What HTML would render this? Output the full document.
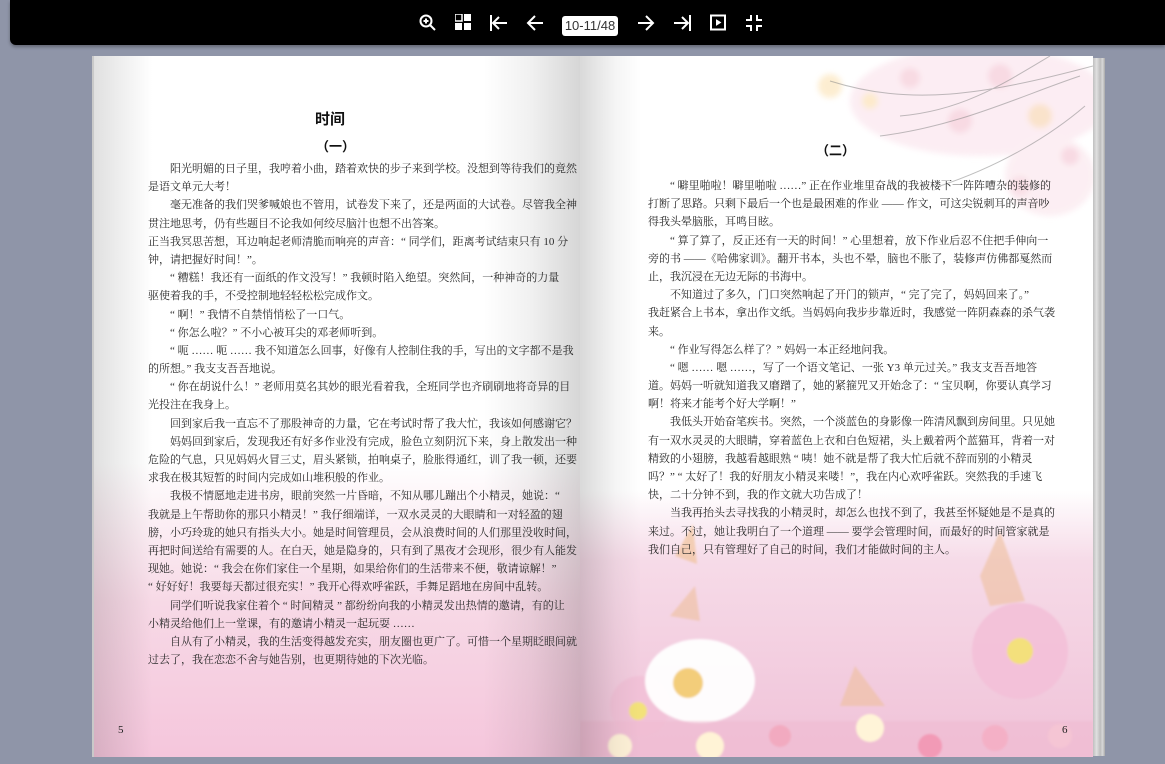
<!DOCTYPE html>
<html><head><meta charset="utf-8"><style>
*{margin:0;padding:0;box-sizing:border-box}
body{width:1165px;height:764px;overflow:hidden;background:#8f95a8;position:relative;font-family:"Liberation Serif","Noto Serif CJK SC","Noto Sans CJK SC",serif;}
.tb{position:absolute;left:10px;top:0;width:1155px;height:45px;background:#000;border-bottom-left-radius:6px;box-shadow:0 2px 3px rgba(0,0,0,.3)}
.ic{position:absolute;top:14px}
.pg{position:absolute;left:562px;top:16px;width:56px;height:20px;background:#fff;border-radius:3px;font:13px "Liberation Sans",sans-serif;color:#333;text-align:center;line-height:20px}
.lp{position:absolute;left:92px;top:56px;width:488px;height:701px;background:linear-gradient(180deg,#fff 0,#fff 58%,#f7d9e6 78%,#f5c6dc 100%);border-left:2px solid #c9c9c9}
.lp:after{content:"";position:absolute;inset:0;background:linear-gradient(90deg,rgba(0,0,0,.12) 0,rgba(0,0,0,0) 12%,rgba(0,0,0,0) 80%,rgba(0,0,0,.06) 90%,rgba(0,0,0,.16) 100%)}
.rp{position:absolute;left:580px;top:56px;width:513px;height:701px;background:linear-gradient(180deg,#fff 0,#fff 62%,#f6dbe8 72%,#f0c2d8 100%);overflow:hidden}
.rp:after{content:"";position:absolute;inset:0;background:linear-gradient(90deg,rgba(0,0,0,.15) 0,rgba(0,0,0,.04) 7%,rgba(0,0,0,0) 12%)}
.edge{position:absolute;left:1093px;top:58px;width:12px;height:698px;background:linear-gradient(90deg,#bfbfbf,#e0e0e0 30%,#bdbdbd 60%,#d8d8d8 80%,#a8a8a8)}
.t{position:absolute;font-size:11px;color:#2a2a2a;line-height:18.2px;z-index:2}
.t div{text-align:justify;text-align-last:justify;white-space:nowrap;height:18.2px}
.t div.e{text-align-last:left}
.t div.i{padding-left:22px}
h1{position:absolute;font:bold 15px "Liberation Sans","Noto Sans CJK SC",sans-serif;color:#111;z-index:2}
.num{position:absolute;font-size:11px;color:#222;z-index:2}
</style></head><body>
<div class="tb"></div>
<svg class="ic" style="left:419px" width="18" height="18" viewBox="0 0 18 18" fill="none" stroke="#fff" stroke-width="2"><circle cx="7" cy="7" r="5.5"/><path d="M11 11l5 5M7 4.5v5M4.5 7h5"/></svg>
<svg class="ic" style="left:455px" width="17" height="17" viewBox="0 0 17 17" fill="#fff"><rect x="0" y="0" width="7" height="7" fill="none" stroke="#fff" stroke-width="1.5"/><rect x="9" y="0" width="7" height="7"/><rect x="0" y="9" width="7" height="7"/><rect x="9" y="9" width="7" height="7"/></svg>
<svg class="ic" style="left:489px" width="20" height="18" viewBox="0 0 20 18" fill="none" stroke="#fff" stroke-width="2"><path d="M2 1v16M18 9H5M10 3L4 9l6 6"/></svg>
<svg class="ic" style="left:526px" width="18" height="18" viewBox="0 0 18 18" fill="none" stroke="#fff" stroke-width="2"><path d="M17 9H3M9 2L2 9l7 7"/></svg>
<div class="pg">10-11/48</div>
<svg class="ic" style="left:637px" width="18" height="18" viewBox="0 0 18 18" fill="none" stroke="#fff" stroke-width="2"><path d="M1 9h14M9 2l7 7-7 7"/></svg>
<svg class="ic" style="left:672px" width="20" height="18" viewBox="0 0 20 18" fill="none" stroke="#fff" stroke-width="2"><path d="M18 1v16M2 9h13M10 3l6 6-6 6"/></svg>
<svg class="ic" style="left:710px" width="16" height="17" viewBox="0 0 16 17" fill="none" stroke="#fff" stroke-width="2"><rect x="1" y="1.5" width="14" height="14"/><path d="M6.5 6v5l4-2.5z" fill="#fff" stroke-width="1"/></svg>
<svg class="ic" style="left:745px" width="18" height="18" viewBox="0 0 18 18" fill="none" stroke="#fff" stroke-width="2"><path d="M6 1v5H1M12 1v5h5M6 17v-5H1M12 17v-5h5"/></svg>

<div class="lp"></div>
<div class="rp">
<svg width="513" height="701" style="position:absolute;left:0;top:0">
<defs><filter id="b" x="-20%" y="-20%" width="140%" height="140%"><feGaussianBlur stdDeviation="3"/></filter><filter id="b2"><feGaussianBlur stdDeviation="1"/></filter></defs>
<g opacity=".7" filter="url(#b)">
<ellipse cx="400" cy="45" rx="130" ry="55" fill="#fbe6ee"/>
<ellipse cx="470" cy="120" rx="45" ry="40" fill="#fbe8ee"/>
<circle cx="250" cy="30" r="12" fill="#fce6be"/><circle cx="330" cy="22" r="10" fill="#f6ccd8"/><circle cx="420" cy="20" r="12" fill="#f6cbd8"/><circle cx="460" cy="60" r="12" fill="#f9d8b6"/><circle cx="380" cy="65" r="12" fill="#f6cbd8"/><circle cx="490" cy="100" r="9" fill="#f6cbd8"/><circle cx="290" cy="45" r="8" fill="#fde2b6"/><circle cx="440" cy="130" r="10" fill="#f7d3dd"/>
</g>
<path d="M250 25 C330 50 400 40 513 10M300 80 C380 70 440 40 500 20M360 130 C420 110 470 80 505 50M320 60C380 55 420 30 470 0" stroke="#888" stroke-width="1" fill="none" opacity=".55"/>
<g filter="url(#b2)">
<circle cx="440" cy="595" r="48" fill="#f3c0d8" opacity=".9"/><circle cx="440" cy="595" r="13" fill="#f3e07c"/>
<circle cx="60" cy="650" r="30" fill="#f2c2d8"/><circle cx="58" cy="655" r="9" fill="#f3e27a"/>
<ellipse cx="120" cy="625" rx="55" ry="42" fill="#fff" opacity=".95"/>
<circle cx="108" cy="627" r="15" fill="#f3cd7a"/>
<path d="M90 560l25-30 5 35zM400 520l20-45 25 70-35 5zM260 650l15-40 30 40z" fill="#eec09c" opacity=".6"/>
<path d="M95 500 l18-32 4 40z" fill="#f0c090" opacity=".6"/>
<rect x="0" y="665" width="513" height="36" fill="#f0b9cf" opacity=".5"/>
<circle cx="40" cy="690" r="12" fill="#fff2d8"/><circle cx="130" cy="690" r="14" fill="#fff3d6"/><circle cx="200" cy="680" r="11" fill="#f2aac0"/><circle cx="290" cy="672" r="14" fill="#fff4d8"/><circle cx="350" cy="690" r="12" fill="#f29ab6"/><circle cx="415" cy="682" r="13" fill="#f4b0c6"/><circle cx="480" cy="680" r="12" fill="#f5c5d4"/>
</g>
</svg>
</div>
<div class="edge"></div>

<h1 style="left:315px;top:108px;font-size:15px">时间</h1>
<h1 style="left:316px;top:136px;font-size:13px">（一）</h1>
<div class="t" style="left:148px;top:160px;width:392px">
<div class="i">阳光明媚的日子里，我哼着小曲，踏着欢快的步子来到学校。没想到等待我们的竟然</div>
<div class="e">是语文单元大考！</div>
<div class="i">毫无准备的我们哭爹喊娘也不管用，试卷发下来了，还是两面的大试卷。尽管我全神</div>
<div class="e">贯注地思考，仍有些题目不论我如何绞尽脑汁也想不出答案。</div>
<div>正当我冥思苦想，耳边响起老师清脆而响亮的声音：“ 同学们，距离考试结束只有 10 分</div>
<div class="e">钟，请把握好时间！”。</div>
<div class="i">“ 糟糕！我还有一面纸的作文没写！” 我顿时陷入绝望。突然间，一种神奇的力量</div>
<div class="e">驱使着我的手，不受控制地轻轻松松完成作文。</div>
<div class="i e">“ 啊！” 我情不自禁悄悄松了一口气。</div>
<div class="i e">“ 你怎么啦？” 不小心被耳尖的邓老师听到。</div>
<div class="i">“ 呃 …… 呃 …… 我不知道怎么回事，好像有人控制住我的手，写出的文字都不是我</div>
<div class="e">的所想。” 我支支吾吾地说。</div>
<div class="i">“ 你在胡说什么！” 老师用莫名其妙的眼光看着我，全班同学也齐刷刷地将奇异的目</div>
<div class="e">光投注在我身上。</div>
<div class="i">回到家后我一直忘不了那股神奇的力量，它在考试时帮了我大忙，我该如何感谢它？</div>
<div class="i">妈妈回到家后，发现我还有好多作业没有完成，脸色立刻阴沉下来，身上散发出一种</div>
<div>危险的气息，只见妈妈火冒三丈，眉头紧锁，拍响桌子，脸胀得通红，训了我一顿，还要</div>
<div class="e">求我在极其短暂的时间内完成如山堆积般的作业。</div>
<div class="i">我极不情愿地走进书房，眼前突然一片昏暗，不知从哪儿蹦出个小精灵，她说：“</div>
<div>我就是上午帮助你的那只小精灵！” 我仔细端详，一双水灵灵的大眼睛和一对轻盈的翅</div>
<div>膀，小巧玲珑的她只有指头大小。她是时间管理员，会从浪费时间的人们那里没收时间，</div>
<div>再把时间送给有需要的人。在白天，她是隐身的，只有到了黑夜才会现形，很少有人能发</div>
<div>现她。她说：“ 我会在你们家住一个星期，如果给你们的生活带来不便，敬请谅解！”</div>
<div class="e">“ 好好好！我要每天都过很充实！” 我开心得欢呼雀跃，手舞足蹈地在房间中乱转。</div>
<div class="i">同学们听说我家住着个 “ 时间精灵 ” 都纷纷向我的小精灵发出热情的邀请，有的让</div>
<div class="e">小精灵给他们上一堂课，有的邀请小精灵一起玩耍 ……</div>
<div class="i">自从有了小精灵，我的生活变得越发充实，朋友圈也更广了。可惜一个星期眨眼间就</div>
<div class="e">过去了，我在恋恋不舍与她告别，也更期待她的下次光临。</div>
</div>
<div class="num" style="left:118px;top:724px">5</div>

<h1 style="left:816px;top:140px;font-size:13px">（二）</h1>
<div class="t" style="left:648px;top:177px;width:375px;line-height:18px">
<div class="i">“ 噼里啪啦！噼里啪啦 ……” 正在作业堆里奋战的我被楼下一阵阵嘈杂的装修的</div>
<div>打断了思路。只剩下最后一个也是最困难的作业 —— 作文，可这尖锐刺耳的声音吵</div>
<div class="e">得我头晕脑胀，耳鸣目眩。</div>
<div class="i">“ 算了算了，反正还有一天的时间！” 心里想着，放下作业后忍不住把手伸向一</div>
<div>旁的书 ——《哈佛家训》。翻开书本，头也不晕，脑也不胀了，装修声仿佛都戛然而</div>
<div class="e">止，我沉浸在无边无际的书海中。</div>
<div class="i">不知道过了多久，门口突然响起了开门的锁声，“ 完了完了，妈妈回来了。”</div>
<div>我赶紧合上书本，拿出作文纸。当妈妈向我步步靠近时，我感觉一阵阴森森的杀气袭</div>
<div class="e">来。</div>
<div class="i e">“ 作业写得怎么样了？” 妈妈一本正经地问我。</div>
<div class="i">“ 嗯 …… 嗯 ……，写了一个语文笔记、一张 Y3 单元过关。” 我支支吾吾地答</div>
<div>道。妈妈一听就知道我又磨蹭了，她的紧箍咒又开始念了：“ 宝贝啊，你要认真学习</div>
<div class="e">啊！将来才能考个好大学啊！”</div>
<div class="i">我低头开始奋笔疾书。突然，一个淡蓝色的身影像一阵清风飘到房间里。只见她</div>
<div>有一双水灵灵的大眼睛，穿着蓝色上衣和白色短裙，头上戴着两个蓝猫耳，背着一对</div>
<div>精致的小翅膀，我越看越眼熟 “ 咦！她不就是帮了我大忙后就不辞而别的小精灵</div>
<div>吗？” “ 太好了！我的好朋友小精灵来喽！”，我在内心欢呼雀跃。突然我的手速飞</div>
<div class="e">快，二十分钟不到，我的作文就大功告成了！</div>
<div class="i">当我再抬头去寻找我的小精灵时，却怎么也找不到了，我甚至怀疑她是不是真的</div>
<div>来过。不过，她让我明白了一个道理 —— 要学会管理时间，而最好的时间管家就是</div>
<div class="e">我们自己，只有管理好了自己的时间，我们才能做时间的主人。</div>
</div>
<div class="num" style="left:1062px;top:724px">6</div>
</body></html>
